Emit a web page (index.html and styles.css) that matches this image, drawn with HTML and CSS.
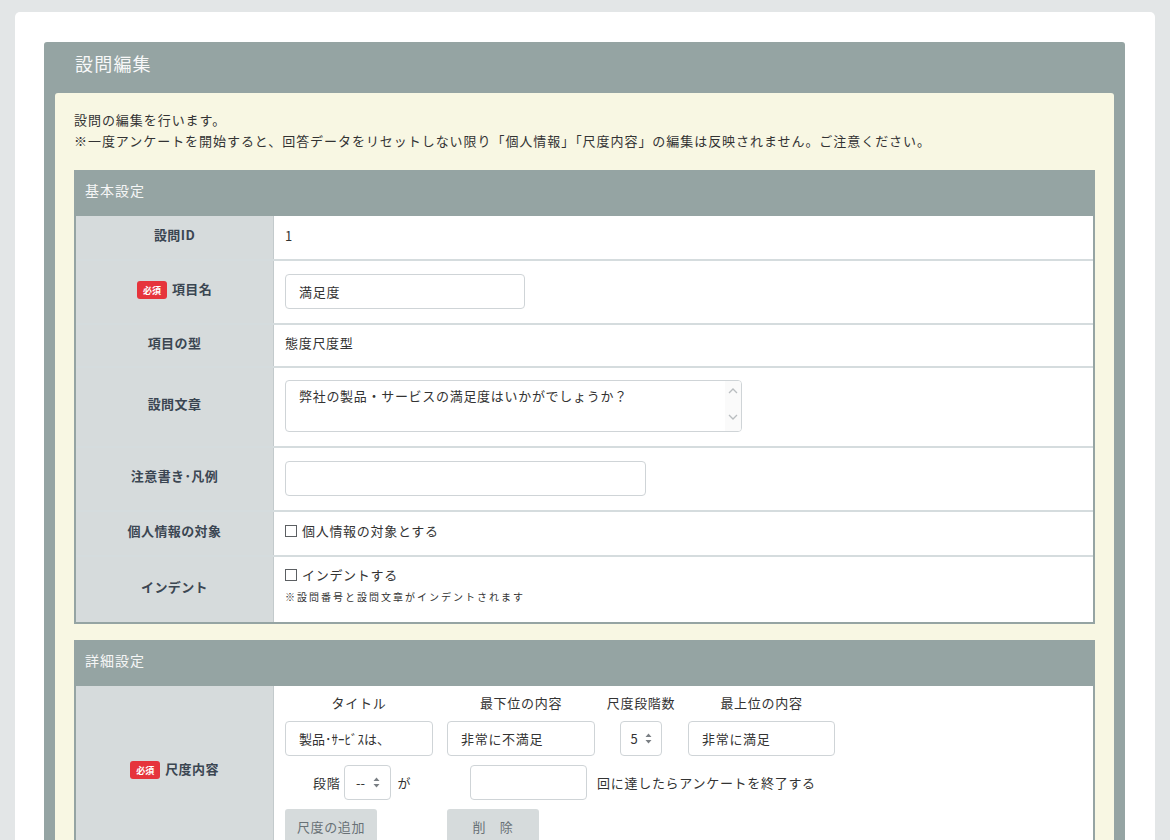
FILE: index.html
```html
<!DOCTYPE html>
<html lang="ja">
<head>
<meta charset="utf-8">
<title>設問編集</title>
<link rel="stylesheet" href="styles.css">
</head>
<body>
<div class="card">
  <div class="panel">
    <div class="panel-title">設問編集</div>
    <div class="cream">
      <div class="intro">
        <p>設問の編集を行います。</p>
        <p>※一度アンケートを開始すると、回答データをリセットしない限り「個人情報」「尺度内容」の編集は反映されません。ご注意ください。</p>
      </div>

      <div class="section">
        <div class="section-head">基本設定</div>
        <div class="row">
          <div class="label">設問ID</div>
          <div class="value v-sm">1</div>
        </div>
        <div class="row">
          <div class="label"><span class="badge">必須</span>項目名</div>
          <div class="value v-in"><input class="field w240" type="text" value="満足度"></div>
        </div>
        <div class="row">
          <div class="label">項目の型</div>
          <div class="value v-sm2">態度尺度型</div>
        </div>
        <div class="row">
          <div class="label">設問文章</div>
          <div class="value v-ta">
            <div class="ta">
              <div class="ta-text">弊社の製品・サービスの満足度はいかがでしょうか？</div>
              <div class="ta-bar">
                <svg width="10" height="6" viewBox="0 0 10 6"><path d="M1 5 L5 1 L9 5" fill="none" stroke="#b9bdc0" stroke-width="1.3"/></svg>
                <svg width="10" height="6" viewBox="0 0 10 6"><path d="M1 1 L5 5 L9 1" fill="none" stroke="#b9bdc0" stroke-width="1.3"/></svg>
              </div>
            </div>
          </div>
        </div>
        <div class="row">
          <div class="label">注意書き･凡例</div>
          <div class="value v-in"><input class="field w361" type="text" value=""></div>
        </div>
        <div class="row">
          <div class="label">個人情報の対象</div>
          <div class="value v-cb"><div class="check"><span class="cb"></span>個人情報の対象とする</div></div>
        </div>
        <div class="row">
          <div class="label">インデント</div>
          <div class="value v-ind">
            <div class="check"><span class="cb"></span>インデントする</div>
            <div class="note">※設問番号と設問文章がインデントされます</div>
          </div>
        </div>
      </div>

      <div class="section section-2">
        <div class="section-head">詳細設定</div>
        <div class="row">
          <div class="label"><span class="badge">必須</span>尺度内容</div>
          <div class="value scale">
            <div class="scale-row">
              <div class="hd c1">タイトル</div>
              <div class="hd c2">最下位の内容</div>
              <div class="hd c3">尺度段階数</div>
              <div class="hd c4">最上位の内容</div>
            </div>
            <div class="scale-row">
              <input class="field c1 narrow" type="text" value="製品･ｻｰﾋﾞｽは、">
              <input class="field c2" type="text" value="非常に不満足">
              <div class="sel c3"><span>5</span>
                <svg width="7" height="11" viewBox="0 0 7 11"><path d="M3.5 0.5 L6.5 4 L0.5 4 Z M3.5 10.5 L6.5 7 L0.5 7 Z" fill="#7a7f84"/></svg>
              </div>
              <input class="field c4" type="text" value="非常に満足">
            </div>
            <div class="scale-row">
              <span class="step">段階</span>
              <div class="sel sel-wide"><span>--</span>
                <svg width="7" height="11" viewBox="0 0 7 11"><path d="M3.5 0.5 L6.5 4 L0.5 4 Z M3.5 10.5 L6.5 7 L0.5 7 Z" fill="#7a7f84"/></svg>
              </div>
              <span class="ga">が</span>
              <input class="field w117" type="text" value="">
              <span class="end-text">回に達したらアンケートを終了する</span>
            </div>
            <div class="scale-row">
              <div class="btn">尺度の追加</div>
              <div class="btn btn-del">削　除</div>
            </div>
          </div>
        </div>
      </div>
    </div>
  </div>
</div>
</body>
</html>
```

FILE: styles.css
```css
html, body {
  height: 100%;
  overflow: hidden;
}
body {
  margin: 0;
  padding: 12px 15px 0;
  background: #e3e6e7;
  font-family: "Noto Sans CJK JP", "Noto Sans", sans-serif;
  color: #333;
  font-size: 13px;
}
.card {
  background: #fff;
  border-radius: 5px;
  padding: 30px 30px 0 29px;
  min-height: 1000px;
}
.panel {
  background: #95a4a3;
  border-radius: 3px 3px 0 0;
  padding: 0 11px;
}
.panel-title {
  height: 51px;
  box-sizing: border-box;
  padding: 9px 0 0 20px;
  font-size: 18px;
  line-height: 24px;
  letter-spacing: 1.2px;
  color: #f7f8f8;
}
.cream {
  background: #f8f7e3;
  border-radius: 3px 3px 0 0;
  padding: 16px 19px 40px;
}
.intro {
  margin-bottom: 19px;
}
.intro p {
  margin: 0;
  line-height: 21px;
  letter-spacing: 0.95px;
  color: #333;
}
.section {
  border: 2px solid #95a4a3;
  background: #fff;
}
.section-2 {
  margin-top: 16px;
}
.section-head {
  background: #95a4a3;
  height: 44px;
  box-sizing: border-box;
  padding: 8px 0 0 9px;
  line-height: 20px;
  font-size: 14px;
  letter-spacing: 1px;
  color: #f5f6f6;
}
.row {
  display: grid;
  grid-template-columns: 198px 1fr;
}
.row + .row {
  border-top: 2px solid #d5dcde;
}
.label {
  background: #d6dbdc;
  border-right: 1px solid #c3cacc;
  display: flex;
  align-items: center;
  justify-content: center;
  gap: 5px;
  padding-bottom: 7px;
  font-weight: bold;
  font-size: 13px;
  letter-spacing: 0.4px;
  color: #3b4652;
}
.badge {
  display: inline-flex;
  align-items: center;
  justify-content: center;
  width: 30px;
  height: 18px;
  border-radius: 3px;
  background: #e6343c;
  color: #fff;
  font-size: 9px;
  font-weight: bold;
  letter-spacing: 0;
  margin-top: 3px;
}
.value {
  box-sizing: border-box;
  padding: 0 11px;
  display: flex;
  flex-direction: column;
  justify-content: center;
  align-items: flex-start;
  line-height: 20px;
  letter-spacing: 0.7px;
  color: #333;
}
.v-sm { min-height: 43px; padding-bottom: 4px; }
.v-sm2 { min-height: 41px; padding-bottom: 6px; }
.v-in { min-height: 62px; padding-bottom: 2px; }
.v-ta { min-height: 78px; padding-bottom: 2px; }
.v-cb { min-height: 43px; padding-bottom: 5px; }
.v-ind {
  min-height: 65px;
  justify-content: flex-start;
  padding-top: 8px;
  gap: 4px;
}
.field {
  height: 35px;
  box-sizing: border-box;
  border: 1px solid #cfd4d7;
  border-radius: 4px;
  padding: 0 13px;
  font-family: "Noto Sans CJK JP", "Noto Sans", sans-serif;
  font-size: 13px;
  letter-spacing: 0.7px;
  color: #333;
  background: #fff;
  outline: none;
  margin: 0;
}
.narrow {
  letter-spacing: 0;
}
.w240 { width: 240px; }
.w361 { width: 361px; }
.ta {
  width: 457px;
  height: 52px;
  box-sizing: border-box;
  border: 1px solid #cfd4d7;
  border-radius: 4px;
  display: flex;
  overflow: hidden;
}
.ta-text {
  flex: 1;
  padding: 5px 13px;
  line-height: 20px;
}
.ta-bar {
  width: 16px;
  background: #fafafa;
  display: flex;
  flex-direction: column;
  justify-content: space-between;
  align-items: center;
  padding: 7px 0 11px;
}
.check {
  display: flex;
  align-items: center;
}
.cb {
  width: 12px;
  height: 12px;
  box-sizing: border-box;
  border: 1px solid #5c5f62;
  background: #fff;
  margin-right: 5px;
}
.note {
  font-size: 10px;
  line-height: 16px;
  letter-spacing: 2px;
  color: #333;
}
.scale {
  justify-content: flex-start;
  padding: 7px 11px 14px;
  gap: 8px;
}
.scale-row {
  display: flex;
  align-items: center;
}
.scale-row + .scale-row + .scale-row {
  margin-top: 1px;
}
.hd {
  display: flex;
  justify-content: center;
  white-space: nowrap;
  line-height: 20px;
  color: #333;
}
.c1 { width: 148px; margin-right: 14px; }
.c2 { width: 148px; margin-right: 25px; }
.c3 { width: 42px; margin-right: 26px; }
.c4 { width: 147px; }
.sel {
  height: 35px;
  box-sizing: border-box;
  border: 1px solid #cfd4d7;
  border-radius: 4px;
  display: flex;
  align-items: center;
  justify-content: center;
  gap: 7px;
  letter-spacing: 0;
  color: #333;
  background: #fff;
}
.sel-wide {
  width: 47px;
  margin-left: 4px;
  gap: 8px;
}
.step {
  margin-left: 28px;
}
.ga {
  margin-left: 6px;
}
.w117 {
  width: 117px;
  margin-left: 59px;
}
.end-text {
  margin-left: 10px;
}
.btn {
  width: 92px;
  height: 35px;
  box-sizing: border-box;
  padding: 0 0 0 12px;
  display: flex;
  align-items: center;
  white-space: nowrap;
  background: #d6dbdc;
  border-radius: 3px;
  color: #687176;
  letter-spacing: 0.6px;
}
.btn-del {
  margin-left: 70px;
  justify-content: center;
  padding: 0;
}
```
